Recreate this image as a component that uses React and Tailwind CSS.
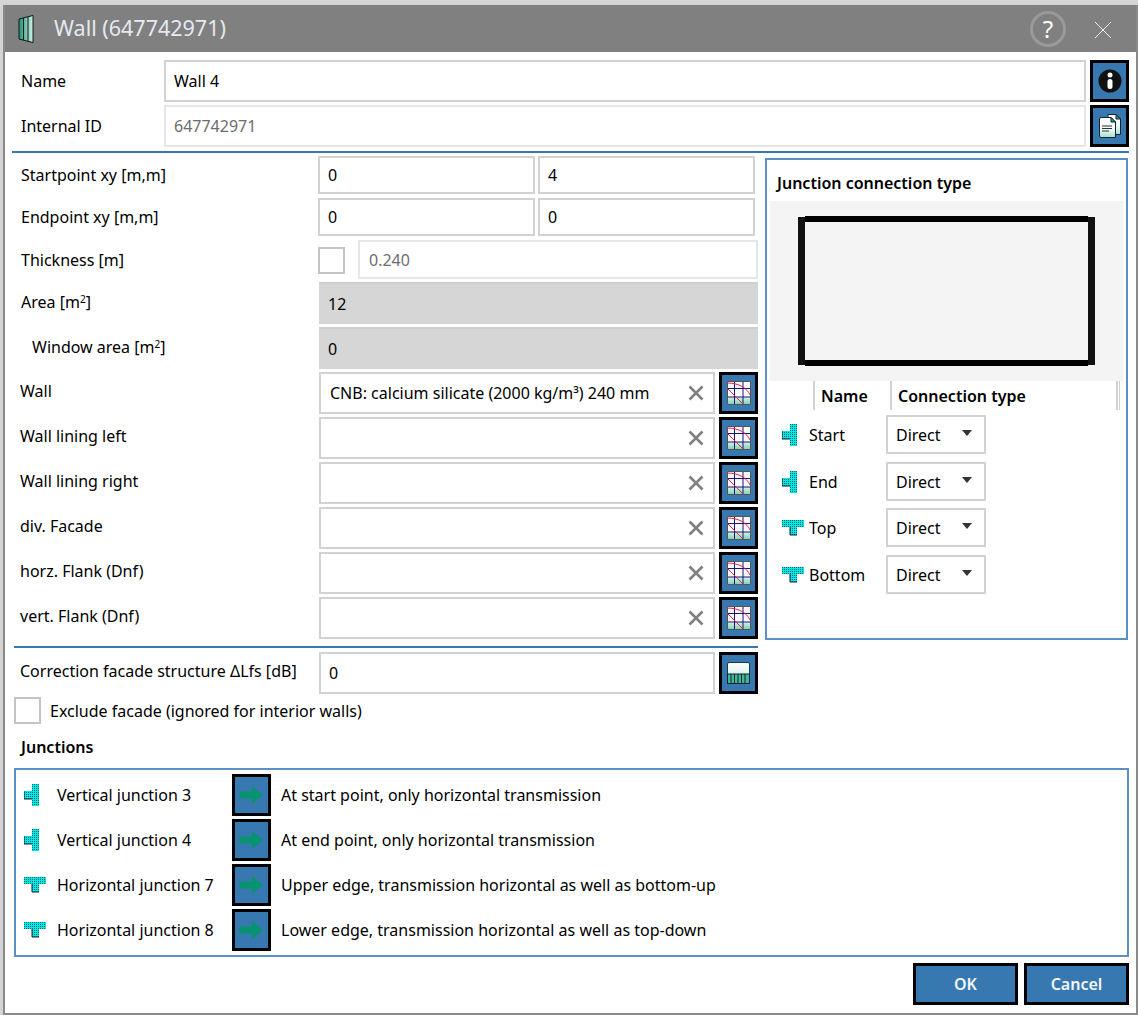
import React from "react";

const Hatch = ({ id }) => (
  <defs>
    <pattern id={id} width="2" height="2" patternUnits="userSpaceOnUse">
      <rect width="2" height="2" fill="#00e8e8" />
      <rect width="1" height="1" fill="#0a6a6a" />
    </pattern>
  </defs>
);

const VJunction = ({ id }) => (
  <svg width="16" height="22" viewBox="0 0 16 22" className="shrink-0">
    <Hatch id={id} />
    <path d="M8 0H15V22H8V15H0V7H8Z" fill={`url(#${id})`} />
    <path d="M0 7V15H8" fill="none" stroke="#123" strokeWidth="1" />
  </svg>
);

const HJunction = ({ id }) => (
  <svg width="23" height="16" viewBox="0 0 23 16" className="shrink-0">
    <Hatch id={id} />
    <path d="M0 0H22V7H15V15H8V7H0Z" fill={`url(#${id})`} />
    <path d="M8 7V15H15" fill="none" stroke="#123" strokeWidth="1" />
  </svg>
);

const GridIcon = ({ id }) => (
  <svg width="24" height="24" viewBox="0 0 24 24">
    <defs>
      <linearGradient id={id} x1="0" y1="0" x2="0" y2="1">
        <stop offset="0" stopColor="#d8f0e8" />
        <stop offset="1" stopColor="#80d0b0" />
      </linearGradient>
    </defs>
    <rect x="0.5" y="0.5" width="23" height="23" fill="#fafafa" />
    <rect x="0.5" y="16" width="23" height="7.5" fill={`url(#${id})`} />
    <path d="M7.5 0V24M16 0V24M0 7.5H24M0 16H24" stroke="#14147a" strokeWidth="1" fill="none" />
    <path d="M0.5 0.5H23.5M0.5 23.5H23.5M0.5 0.5V23.5M23.5 0.5V23.5" stroke="#555" strokeWidth="1" fill="none" />
    <path d="M0 2C12 2 20 7 23 14" stroke="#f02040" strokeWidth="1" fill="none" />
    <path d="M0 7L16 23" stroke="#f02040" strokeWidth="1" fill="none" />
  </svg>
);

const FacadeIcon = () => (
  <svg width="23" height="22" viewBox="0 0 23 22">
    <defs>
      <linearGradient id="facTop" x1="0" y1="0" x2="0" y2="1">
        <stop offset="0" stopColor="#fff" />
        <stop offset="0.4" stopColor="#e8f6f2" />
        <stop offset="1" stopColor="#9fdcc8" />
      </linearGradient>
    </defs>
    <path d="M0.5 2Q0.5 0.5 2 0.5H21Q22.5 0.5 22.5 2V21.5H0.5Z" fill="url(#facTop)" stroke="#1a3a4a" />
    <rect x="0.5" y="12" width="22" height="9.5" fill="#3eb896" stroke="#123" />
    <path d="M4 12V21M7.5 12V21M11 12V21M14.5 12V21M18 12V21" stroke="#123" strokeWidth="1" fill="none" />
  </svg>
);

const InfoIcon = () => (
  <svg width="24" height="24" viewBox="0 0 24 24">
    <circle cx="12" cy="12" r="11.5" fill="#111" />
    <circle cx="12" cy="6" r="2.5" fill="#fff" />
    <rect x="9.5" y="10" width="5" height="10" rx="2.5" fill="#fff" />
  </svg>
);

const DocsIcon = () => (
  <svg width="22" height="24" viewBox="0 0 22 24">
    <defs>
      <linearGradient id="docG" x1="0" y1="0" x2="0" y2="1">
        <stop offset="0" stopColor="#fff" />
        <stop offset="0.55" stopColor="#f4fbf9" />
        <stop offset="1" stopColor="#a8dfcf" />
      </linearGradient>
    </defs>
    <path d="M9 0.5H17L21.5 5V20.5H9Z" fill="url(#docG)" stroke="#123" />
    <path d="M17 0.5L21.5 5H17Z" fill="#2aa088" stroke="#123" />
    <path d="M0.5 5Q0.5 3.5 2 3.5H12L16.5 8V23.5H2Q0.5 23.5 0.5 22Z" fill="url(#docG)" stroke="#123" />
    <path d="M12 3.5L16.5 8H12Z" fill="#2aa088" stroke="#123" />
    <path d="M3 12H13M3 14.5H13M3 17H10" stroke="#333" strokeWidth="1" fill="none" />
  </svg>
);

const Arrow = () => (
  <svg width="25" height="20" viewBox="0 0 25 20">
    <path d="M3.5 6.5H13V1L24 10L13 19V13.5H3.5Q0 13.5 0 10Q0 6.5 3.5 6.5Z" fill="#07936f" />
  </svg>
);

const IconBtn = ({ children, className = "" }) => (
  <div className={`w-[39px] h-[42px] shrink-0 border-[3px] border-black bg-[#3878b0] flex items-center justify-center ${className}`}>
    {children}
  </div>
);

const Input = ({ value, className = "" }) => (
  <div className={`border-2 border-[#d2d2d2] bg-white flex items-center pl-[8px] text-black ${className}`}>{value}</div>
);

const MaterialRow = ({ label, value, idx, labelClass = "pl-[6px]" }) => (
  <div className="flex h-[42px] items-start">
    <div className={`w-[305px] shrink-0 h-[38px] flex items-center ${labelClass}`}>{label}</div>
    <div className="w-[396px] h-[42px] border-2 border-[#d2d2d2] flex items-center pl-[9px] pr-[9px] justify-between">
      <span>{value}</span>
      <svg width="16" height="16" viewBox="0 0 16 16" className="shrink-0">
        <path d="M1.5 1.5L14.5 14.5M14.5 1.5L1.5 14.5" stroke="#808080" strokeWidth="2.6" fill="none" />
      </svg>
    </div>
    <IconBtn className="ml-[4px]"><GridIcon id={`grid${idx}`} /></IconBtn>
  </div>
);

const Select = () => (
  <div className="w-[100px] h-[39px] border-2 border-[#d2d2d2] flex items-center pl-[8px] relative">
    Direct
    <svg width="10" height="6" viewBox="0 0 10 6" className="absolute right-[12px] top-[13px]">
      <path d="M0 0H10L5 6Z" fill="#333" />
    </svg>
  </div>
);

const ConnRow = ({ icon, label, className = "" }) => (
  <div className={`flex items-center h-[39px] ${className}`}>
    <div className="w-[42px] pl-[15px] shrink-0 flex">{icon}</div>
    <div className="w-[77px] shrink-0">{label}</div>
    <Select />
  </div>
);

const JunctionRow = ({ icon, name, text, className = "" }) => (
  <div className={`flex items-center h-[42px] ${className}`}>
    <div className="w-[41px] pl-[8px] shrink-0 flex">{icon}</div>
    <div className="w-[175px] shrink-0">{name}</div>
    <IconBtn><Arrow /></IconBtn>
    <div className="ml-[10px]">{text}</div>
  </div>
);

const PointRow = ({ label, a, b, className = "" }) => (
  <div className={`flex h-[38px] ${className}`}>
    <div className="w-[304px] shrink-0 pl-[7px] flex items-center">{label}</div>
    <Input value={a} className="w-[217px] h-[38px]" />
    <Input value={b} className="w-[217px] h-[38px] ml-[3px]" />
  </div>
);

const Sup = ({ children }) => <sup className="text-[10px] leading-none">{children}</sup>;

const materials = [
  ["Wall", "CNB: calcium silicate (2000 kg/m³) 240 mm"],
  ["Wall lining left", ""],
  ["Wall lining right", ""],
  ["div. Facade", ""],
  ["horz. Flank (Dnf)", ""],
  ["vert. Flank (Dnf)", ""],
];

export default function App() {
  return (
    <div className="w-[1138px] h-[1015px] bg-[#d4d4d4] pt-[5px] pl-[3px] text-black text-[16px] font-['Noto_Sans',sans-serif] overflow-hidden">
      <div className="h-[1010px] border-l-2 border-b-2 border-r-2 border-[#8a8a8a] bg-white flex flex-col">
        {/* title bar */}
        <div className="h-[47px] bg-[#808080] flex items-center shrink-0 relative">
          <svg width="16" height="28" viewBox="0 0 16 28" className="ml-[13px] mt-[1px]">
            <defs>
              <linearGradient id="wallG" x1="0" y1="0" x2="1" y2="0">
                <stop offset="0" stopColor="#1f8f74" />
                <stop offset="1" stopColor="#d5f2e8" />
              </linearGradient>
            </defs>
            <path d="M1 4L15 0.5V27.5L1 24Z" fill="url(#wallG)" stroke="#0a1a1a" />
            <path d="M5.5 3V25M10 2V26" stroke="#0a1a1a" strokeWidth="1" />
          </svg>
          <div className="ml-[20px] text-[21.5px] text-[#e4eaf0]">Wall (647742971)</div>
          <div className="absolute left-[1025px] top-[6px] w-[36px] h-[36px] rounded-full border-[3px] border-[#9a9a9a] flex items-center justify-center text-white text-[24px] leading-none">?</div>
          <svg width="18" height="18" viewBox="0 0 18 18" className="absolute left-[1089px] top-[16px]">
            <path d="M1 1L17 17M17 1L1 17" stroke="#f4f4f4" strokeWidth="1" fill="none" />
          </svg>
        </div>

        {/* name rows */}
        <div className="mt-[8px] flex h-[42px] items-center">
          <div className="w-[159px] pl-[16px] shrink-0">Name</div>
          <Input value="Wall 4" className="w-[922px] h-[42px]" />
          <IconBtn className="ml-[4px]"><InfoIcon /></IconBtn>
        </div>
        <div className="mt-[3px] flex h-[42px] items-center">
          <div className="w-[159px] pl-[16px] shrink-0">Internal ID</div>
          <div className="w-[922px] h-[42px] border-2 border-[#e6e6e6] flex items-center pl-[8px] text-[#6d6d6d]">647742971</div>
          <IconBtn className="ml-[4px]"><DocsIcon /></IconBtn>
        </div>
        <div className="mt-[4px] ml-[7px] w-[1117px] h-[2px] bg-[#3878b0]" />

        {/* main */}
        <div className="flex ml-[9px]">
          <div className="w-[744px] shrink-0 pt-[3px]">
            <PointRow label="Startpoint xy [m,m]" a="0" b="4" />
            <PointRow label="Endpoint xy [m,m]" a="0" b="0" className="mt-[4px]" />
            <div className="flex h-[39px] mt-[4px] items-center">
              <div className="w-[304px] shrink-0 pl-[7px]">Thickness [m]</div>
              <div className="w-[27px] h-[27px] border-2 border-[#c4c4c4] mt-[1px]" />
              <div className="ml-[13px] w-[400px] h-[39px] border-2 border-[#e6e6e6] flex items-center pl-[9px] text-[#6d6d6d]">0.240</div>
            </div>
            <div className="flex h-[42px] mt-[3px]">
              <div className="w-[305px] shrink-0 pl-[7px] h-[40px] flex items-center"><span>Area [m<Sup>2</Sup>]</span></div>
              <div className="w-[439px] bg-[#d6d6d6] border-t-2 border-[#cfcfcf] flex items-center pl-[9px]">12</div>
            </div>
            <div className="flex h-[42px] mt-[3px]">
              <div className="w-[305px] shrink-0 pl-[18px] h-[40px] flex items-center"><span>Window area [m<Sup>2</Sup>]</span></div>
              <div className="w-[439px] bg-[#d6d6d6] border-t-2 border-[#cfcfcf] flex items-center pl-[9px]">0</div>
            </div>
            <div className="mt-[3px] flex flex-col gap-[3px]">
              {materials.map(([l, v], i) => (
                <MaterialRow key={l} label={l} value={v} idx={i} />
              ))}
            </div>
          </div>
          <div className="ml-[7px] mt-[5px] w-[363px] h-[482px] border-2 border-[#5c90c4] flex flex-col">
            <div className="h-[41px] pl-[10px] pt-[11px] font-semibold leading-[24px]">Junction connection type</div>
            <div className="ml-[3px] w-[353px] h-[180px] bg-[#f4f4f4] shrink-0">
              <svg width="353" height="180" viewBox="0 0 353 180">
                <rect x="28" y="16" width="7" height="148" fill="#111" />
                <rect x="318" y="16" width="7" height="148" fill="#111" />
                <rect x="35" y="15" width="283" height="6" fill="#000" />
                <rect x="35" y="159" width="283" height="6" fill="#000" />
              </svg>
            </div>
            <div className="flex h-[29px] font-semibold items-center relative">
              <div className="w-[48px] h-full border-r-2 border-[#d2d2d2]" />
              <div className="w-[77px] h-full border-r-2 border-[#d2d2d2] pl-[6px] flex items-center">Name</div>
              <div className="w-[226px] h-full border-r-2 border-[#d2d2d2] pl-[6px] flex items-center">Connection type</div>
              <div className="w-[2px] h-full border-r border-[#d2d2d2]" />
            </div>
            <ConnRow className="mt-[5px]" icon={<VJunction id="cv1" />} label="Start" />
            <ConnRow className="mt-[8px]" icon={<VJunction id="cv2" />} label="End" />
            <ConnRow className="mt-[7px]" icon={<HJunction id="ch1" />} label="Top" />
            <ConnRow className="mt-[8px]" icon={<HJunction id="ch2" />} label="Bottom" />
          </div>
        </div>

        <div className="mt-[6px] ml-[9px] w-[744px] h-[2px] bg-[#3878b0]" />
        <div className="mt-[4px] ml-[9px] flex h-[42px]">
          <div className="w-[305px] shrink-0 pl-[6px] h-[38px] flex items-center whitespace-nowrap">Correction facade structure ΔLfs [dB]</div>
          <Input value="0" className="w-[396px] h-[42px]" />
          <IconBtn className="ml-[4px]"><FacadeIcon /></IconBtn>
        </div>
        <div className="mt-[3px] ml-[9px] flex h-[27px] items-center">
          <div className="w-[27px] h-[27px] border-2 border-[#c4c4c4]" />
          <div className="ml-[9px]">Exclude facade (ignored for interior walls)</div>
        </div>
        <div className="mt-[11px] ml-[16px] h-[24px] leading-[24px] font-semibold">Junctions</div>
        <div className="mt-[9px] ml-[9px] w-[1115px] h-[189px] border-2 border-[#5c90c4] pt-[4px] flex flex-col gap-[3px]">
          <JunctionRow icon={<VJunction id="jv1" />} name="Vertical junction 3" text="At start point, only horizontal transmission" />
          <JunctionRow icon={<VJunction id="jv2" />} name="Vertical junction 4" text="At end point, only horizontal transmission" />
          <JunctionRow icon={<HJunction id="jh1" />} name="Horizontal junction 7" text="Upper edge, transmission horizontal as well as bottom-up" />
          <JunctionRow icon={<HJunction id="jh2" />} name="Horizontal junction 8" text="Lower edge, transmission horizontal as well as top-down" />
        </div>
        <div className="mt-[6px] ml-[908px] flex gap-[6px]">
          <div className="w-[105px] h-[42px] border-[3px] border-black bg-[#3878b0] text-[#f2f6fa] font-semibold flex items-center justify-center">OK</div>
          <div className="w-[105px] h-[42px] border-[3px] border-black bg-[#3878b0] text-[#f2f6fa] font-semibold flex items-center justify-center">Cancel</div>
        </div>
      </div>
    </div>
  );
}
